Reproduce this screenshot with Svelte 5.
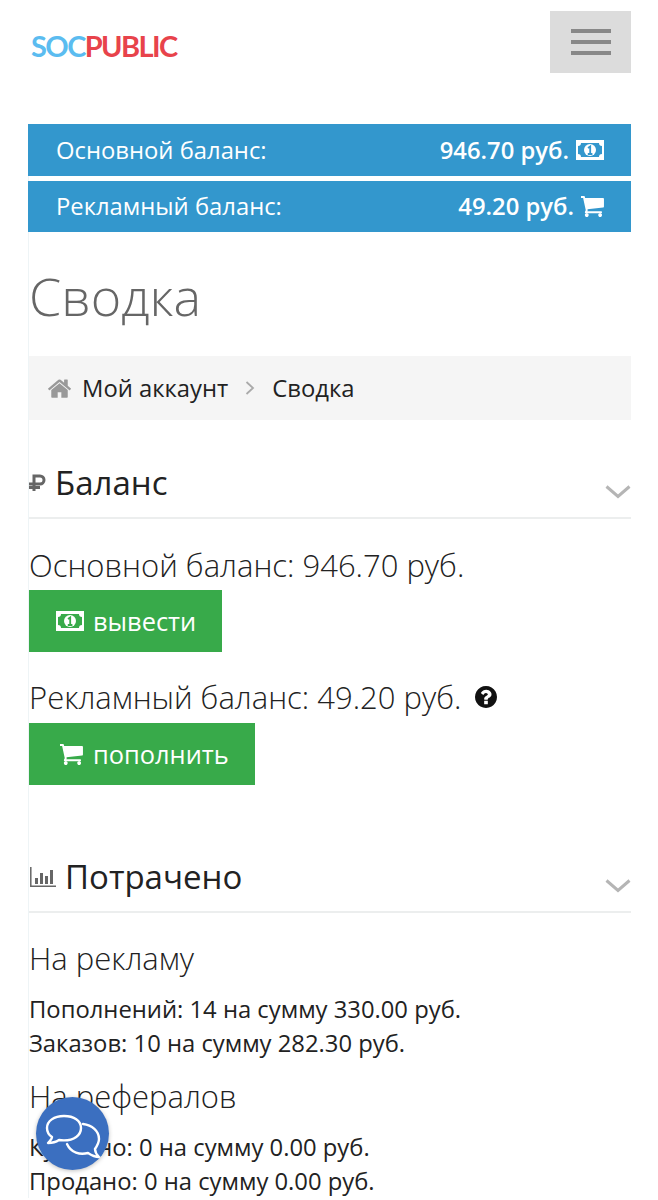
<script>
	const home = 'M1472 992v480q0 26-19 45t-45 19h-384v-384h-256v384h-384q-26 0-45-19t-19-45v-480q0-1 .5-3t.5-3l575-474 575 474q1 2 1 6zm223-69l-62 74q-8 9-21 11h-3q-13 0-21-7l-692-577-692 577q-12 8-24 7-13-2-21-11l-62-74q-8-10-7-23.500t11-21.500l719-599q32-26 76-26t76 26l244 204v-195q0-14 9-23t23-9h192q14 0 23 9t9 23v408l219 182q10 8 11 21.500t-7 23.500z';
	const cart = 'M640 1536q0 52-38 90t-90 38-90-38-38-90 38-90 90-38 90 38 38 90zm896 0q0 52-38 90t-90 38-90-38-38-90 38-90 90-38 90 38 38 90zm128-1088v512q0 24-16.500 42.500t-40.500 21.500l-1044 122q13 60 13 70 0 16-24 64h920q26 0 45 19t19 45-19 45-45 19h-1024q-26 0-45-19t-19-45q0-11 8-31.500t16-36 21.500-40 15.500-29.500l-177-823h-204q-26 0-45-19t-19-45 19-45 45-19h256q16 0 28.500 6.500t19.500 15.500 13 24.500 8 26 5.500 29.500 4.500 26h1201q26 0 45 19t19 45z';
	const question = 'M1024 1376v-192q0-14-9-23t-23-9h-192q-14 0-23 9t-9 23v192q0 14 9 23t23 9h192q14 0 23-9t9-23zm256-672q0-88-55.500-163t-138.500-116-170-41q-243 0-371 213-15 24 8 42l132 100q7 6 19 6 16 0 25-12 53-68 86-92 34-24 86-24 48 0 85.500 26t37.500 59q0 38-20 61t-68 45q-63 28-115.500 86.500t-52.500 125.500v36q0 14 9 23t23 9h192q14 0 23-9t9-23q0-19 21.500-49.500t54.500-49.500q32-18 49-28.500t46-35 44.500-48 28-60.500 12.500-81zm384 192q0 209-103 385.500t-279.500 279.500-385.500 103-385.500-103-279.500-279.500-103-385.500 103-385.500 279.500-279.500 385.500-103 385.500 103 279.500 279.500 103 385.500z';
</script>

{#snippet money()}
	<svg class="money" viewBox="0 0 28 20" aria-hidden="true">
		<path fill="#fff" fill-rule="evenodd" d="M0 0h28v20H0zM5 3Q5 6 2 6v8q3 0 3 3h18q0-3 3-3V6q-3 0-3-3z" />
		<circle cx="14" cy="10" r="6" fill="#fff" />
		<path fill="none" stroke="currentColor" stroke-width="1.800" d="M12 8l2.200-1.500V14M11.800 14h4.600" />
	</svg>
{/snippet}

{#snippet chevron()}
	<svg class="chevron" viewBox="0 0 26 14" aria-hidden="true">
		<path fill="none" stroke="#b5b5b5" stroke-width="3" d="M1.500 1.500L13 11.500 24.500 1.500" />
	</svg>
{/snippet}

<div class="page">
	<header class="top">
		<div class="logo"><span class="soc">SOC</span><span class="pub">PUBLIC</span></div>
		<button class="burger" aria-label="Меню"><i></i><i></i><i></i></button>
	</header>

	<main class="wrap">
		<div class="bar bar-first">
			<span>Основной баланс:</span>
			<span class="bar-val">946.70 руб. <span class="bar-icon">{@render money()}</span></span>
		</div>
		<div class="bar">
			<span>Рекламный баланс:</span>
			<span class="bar-val">49.20 руб. <svg class="cart" viewBox="128 256 1536 1408" aria-hidden="true"><path fill="#fff" d={cart} /></svg></span>
		</div>

		<h1>Сводка</h1>

		<nav class="crumbs">
			<svg class="home" viewBox="90 230 1610 1310" aria-hidden="true"><path fill="#999" d={home} /></svg>
			<span>Мой аккаунт</span>
			<svg class="sep" viewBox="0 0 10 14" aria-hidden="true"><path fill="none" stroke="#aaa" stroke-width="1.800" d="M1.500 1L8 7 1.500 13" /></svg>
			<span>Сводка</span>
		</nav>

		<section class="head head-bal">
			<h2>
				<svg class="rub" viewBox="0 0 18 18" aria-hidden="true"><path fill="none" stroke="#666" stroke-width="3" d="M5 17V2h6a4 4 0 0 1 0 8H0M0 13.500h11" /></svg>
				Баланс
			</h2>
			{@render chevron()}
		</section>

		<p class="big first-big">Основной баланс: 946.70 руб.</p>
		<button class="green">{@render money()} вывести</button>
		<p class="big second-big">Рекламный баланс: 49.20 руб. <svg class="help" viewBox="128 128 1536 1536" aria-hidden="true"><path fill="#111" d={question} /></svg></p>
		<button class="green"><svg class="cart cart-btn" viewBox="128 256 1536 1408" aria-hidden="true"><path fill="#fff" d={cart} /></svg> пополнить</button>

		<section class="head head-spent">
			<h2>
				<svg class="chart" viewBox="0 0 26 20" aria-hidden="true">
					<path fill="none" stroke="#666" stroke-width="1.500" d="M.8 0v19.200H26" />
					<path fill="#666" d="M5 11h3v6H5zM10 6h3v11h-3zM15 9h3v8h-3zM20 3h3v14h-3z" />
				</svg>
				Потрачено
			</h2>
			{@render chevron()}
		</section>

		<h3 class="sub-first">На рекламу</h3>
		<p class="line">Пополнений: 14 на сумму 330.00 руб.</p>
		<p class="line">Заказов: 10 на сумму 282.30 руб.</p>
		<h3>На рефералов</h3>
		<p class="line">Куплено: 0 на сумму 0.00 руб.</p>
		<p class="line">Продано: 0 на сумму 0.00 руб.</p>
	</main>

	<button class="chat" aria-label="Чат">
		<svg viewBox="0 0 56 50" aria-hidden="true">
			<path fill="none" stroke="#fff" stroke-width="2.400" stroke-linejoin="round" d="M19 7C9 7 2 12 2 19c0 4 2 7 5 9 0 2-2 4-4 6 4 0 8-1 11-3 2 .4 3 .4 5 .4 10 0 17-5 17-12.400S29 7 19 7z" />
			<path fill="none" stroke="#fff" stroke-width="2.400" stroke-linejoin="round" stroke-linecap="round" d="M38 15c9 1 16 7 16 15 0 4-2 7-4 10 0 3 2 6 4 8-5 0-8-2-11-4-8 2-17 0-21-9" />
		</svg>
	</button>
</div>

<style>
	:global(body) {
		margin: 0;
		background: #fff;
	}

	.page {
		position: relative;
		height: 1200px;
		overflow: hidden;
		font-family: "Open Sans", sans-serif;
		color: #222;
	}

	.top {
		display: flex;
		justify-content: space-between;
		height: 124px;
		padding: 11px 27px 0 31px;
		box-sizing: border-box;
	}

	.logo {
		margin-top: 15px;
		font-family: Lato, sans-serif;
		font-weight: 700;
		font-size: 29px;
		line-height: 40px;
		letter-spacing: -1.600px;
	}

	.soc {
		color: #5bbcf0;
	}

	.pub {
		color: #e8434b;
	}

	.burger {
		display: flex;
		flex-direction: column;
		justify-content: center;
		align-items: center;
		gap: 7px;
		width: 81px;
		height: 62px;
		padding: 0;
		border: none;
		background: #dcdcdc;
	}

	.burger i {
		display: block;
		width: 40px;
		height: 4px;
		background: #888;
	}

	.wrap {
		margin: 0 27px 0 28px;
		border-left: 1px solid #eef4f6;
	}

	.bar {
		display: flex;
		justify-content: space-between;
		align-items: center;
		height: 51.500px;
		margin-left: -1px;
		padding: 0 27px 0 28px;
		box-sizing: border-box;
		background: #3397cd;
		color: #fff;
		font-size: 23.800px;
	}

	.bar-first {
		margin-bottom: 5px;
	}

	.bar-val {
		display: flex;
		align-items: center;
		gap: 7px;
		font-weight: 600;
	}

	.bar-icon {
		display: flex;
		color: #3397cd;
	}

	.money {
		width: 28px;
		height: 20px;
	}

	.cart {
		width: 23px;
		height: 21px;
	}

	h1 {
		margin: 28px 0 24px;
		font-weight: 300;
		font-size: 52px;
		line-height: 72px;
		color: #666;
	}

	.crumbs {
		display: flex;
		align-items: center;
		height: 64px;
		margin-bottom: 39px;
		padding-left: 19px;
		background: #f5f5f5;
		font-size: 23.800px;
	}

	.home {
		width: 23px;
		height: 19px;
		margin-right: 11px;
	}

	.sep {
		width: 10px;
		height: 14px;
		margin: 0 17px;
	}

	.head {
		display: flex;
		justify-content: space-between;
		align-items: flex-end;
		border-bottom: 2px solid #eceeee;
	}

	.head-bal {
		height: 58px;
		margin-bottom: 25px;
	}

	.head-spent {
		height: 58px;
		margin-top: 68px;
		margin-bottom: 24px;
	}

	h2 {
		display: flex;
		align-items: center;
		gap: 8px;
		margin: 0 0 12px;
		font-weight: 400;
		font-size: 33px;
		line-height: 44px;
		color: #222;
	}

	.rub {
		width: 18px;
		height: 18px;
	}

	.chart {
		width: 28px;
		height: 20px;
	}

	.chevron {
		width: 26px;
		height: 14px;
		margin-bottom: 18px;
	}

	.big {
		margin: 0;
		font-weight: 300;
		font-size: 31px;
		line-height: 42px;
		color: #222;
	}

	.first-big {
		margin-bottom: 4px;
	}

	.second-big {
		display: flex;
		align-items: center;
		gap: 14px;
		margin-top: 24px;
		margin-bottom: 5px;
	}

	.help {
		width: 22px;
		height: 22px;
	}

	.green {
		display: flex;
		align-items: center;
		gap: 9px;
		height: 62px;
		padding: 0 26px 0 27px;
		border: none;
		background: #38aa4a;
		color: #fff;
		font-family: inherit;
		font-size: 25.400px;
	}

	.green .money {
		color: #38aa4a;
	}

	.cart-btn {
		margin: 0 1px 0 4px;
	}

	h3 {
		margin: 15px 0 13px;
		font-weight: 300;
		font-size: 31px;
		line-height: 42px;
		color: #222;
	}

	.sub-first {
		margin-top: 0;
	}

	.line {
		margin: 0;
		font-size: 23.800px;
		line-height: 34px;
	}

	.chat {
		position: absolute;
		left: 36px;
		top: 1097px;
		display: flex;
		align-items: center;
		justify-content: center;
		width: 73px;
		height: 73px;
		padding: 0;
		border: none;
		border-radius: 50%;
		background: #3b6fc0;
		box-shadow: 0 1px 4px rgba(0, 0, 0, 0.25);
	}

	.chat svg {
		width: 56px;
		height: 50px;
	}
</style>
